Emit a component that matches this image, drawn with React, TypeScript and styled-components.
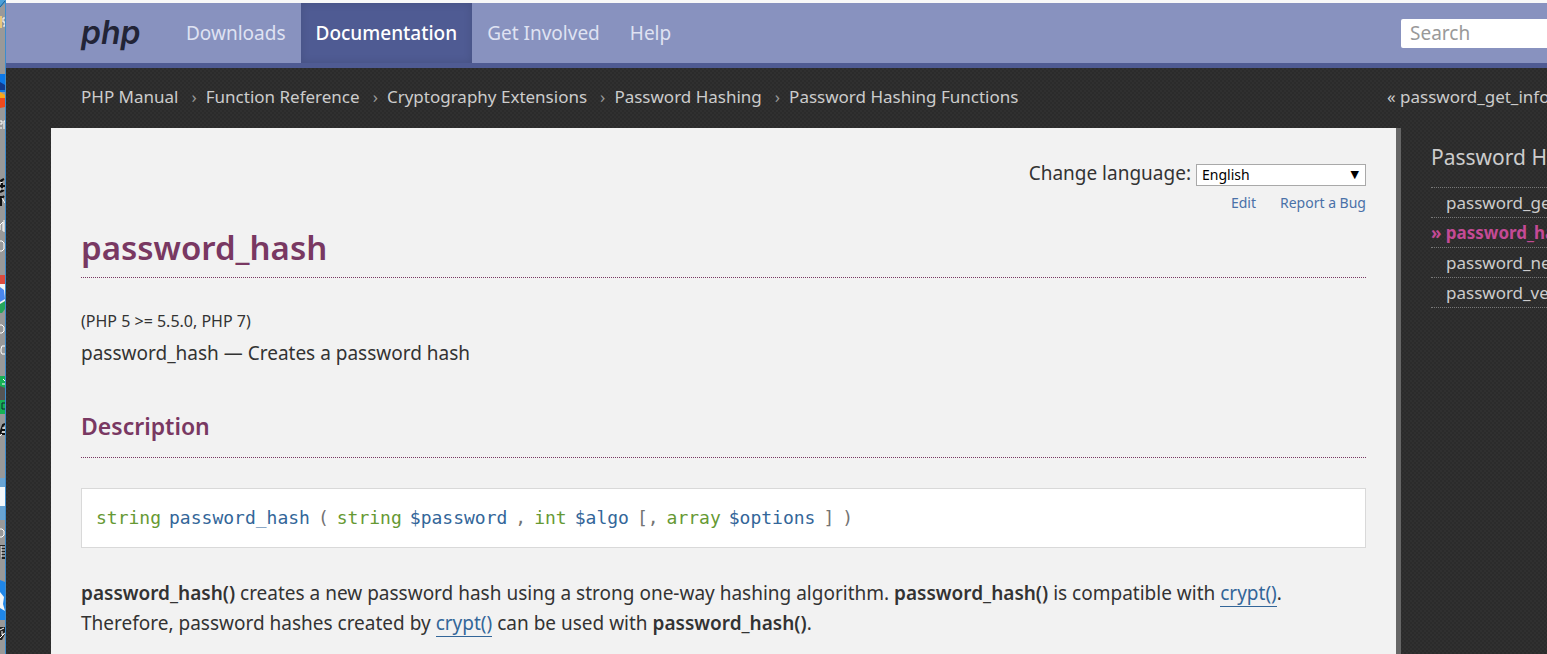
import React from 'react';
import styled, { createGlobalStyle, css } from 'styled-components';

const Global = createGlobalStyle`
  *, *::before, *::after { box-sizing: border-box; }
  body {
    margin: 0;
    background: #333;
    color: #333;
    font: 19px/30px "Noto Sans", "Open Sans", sans-serif;
    overflow-x: hidden;
  }
  a { text-decoration: none; }
`;

const Screen = styled.div`
  display: grid;
  grid-template-columns: 6px minmax(0, 1fr);
  min-height: 100vh;
`;

const DesktopEdge = styled.div`
  background: #999;
  border-right: 1px solid #3d8ccc;
  svg { display: block; }
`;

const Page = styled.div`
  display: flex;
  flex-direction: column;
  background: repeating-conic-gradient(#2b2b2b 0 25%, #303030 0 50%) 0 0 / 4px 4px;
  overflow: hidden;
`;

const Header = styled.header`
  display: flex;
  justify-content: space-between;
  align-items: center;
  height: 68px;
  padding-left: 75px;
  background: #8892bf;
  border-top: 3px solid #f8f8f8;
  border-bottom: 5px solid #4f5b93;
`;

const Brand = styled.a`
  width: 90px;
  color: #222436;
  font-family: Inter, sans-serif;
  font-size: 32px;
  font-weight: 600;
  font-style: italic;
`;

const Nav = styled.nav`
  display: flex;
  flex: 1;
  align-self: stretch;
`;

const NavLink = styled.a<{ $active?: boolean }>`
  display: flex;
  align-items: center;
  padding: 0 15px;
  color: #dfe2f2;
  ${(p) => p.$active && css`
    background: #4f5b93;
    color: #fff;
    font-weight: 500;
    box-shadow: inset 0 0 8px rgba(0, 0, 0, 0.12);
  `}
`;

const Search = styled.input`
  width: 146px;
  height: 29px;
  padding: 0 9px;
  border: 0;
  border-radius: 2px 0 0 2px;
  background: #fff;
  font: inherit;
  &::placeholder { color: #999; opacity: 1; }
`;

const Trail = styled.div`
  display: flex;
  justify-content: space-between;
  padding: 14px 0 16px 75px;
  font-size: 17px;
  white-space: nowrap;
`;

const Crumbs = styled.ol`
  display: flex;
  margin: 0;
  padding: 0;
  list-style: none;
  li + li::before {
    content: "›";
    padding: 0 9px 0 13px;
    color: #999;
  }
`;

const TrailLink = styled.a`
  color: #ccc;
`;

const PrevLink = styled(TrailLink)`
  width: 160px;
`;

const Columns = styled.div`
  display: grid;
  grid-template-columns: minmax(0, 1fr) 151px;
  flex: 1;
  padding-left: 45px;
`;

const Content = styled.main`
  padding: 30px;
  background: #f2f2f2;
`;

const Tools = styled.div`
  display: flex;
  flex-direction: column;
  align-items: flex-end;
`;

const Language = styled.form`
  display: flex;
  align-items: center;
  gap: 5px;
`;

const Picker = styled.span`
  position: relative;
  display: flex;
  padding-top: 3px;
  &::after {
    content: "▼";
    position: absolute;
    right: 7px;
    top: 3px;
    font: 11px/22px "DejaVu Sans", sans-serif;
    color: #000;
    pointer-events: none;
  }
`;

const Select = styled.select`
  appearance: none;
  width: 170px;
  height: 22px;
  padding: 0 5px;
  border: 1px solid #a9a9a9;
  border-radius: 0;
  background: #fff;
  color: #000;
  font: 14px/20px "Noto Sans", sans-serif;
`;

const EditLinks = styled.div`
  display: flex;
  gap: 24px;
  font-size: 14px;
  a { color: #4a71a8; }
`;

const Title = styled.h1`
  margin: 0 0 28px;
  padding: 13px 0 12px;
  border-bottom: 1px dotted #793862;
  color: #793862;
  font-size: 33px;
  line-height: 34px;
  font-weight: 600;
`;

const Version = styled.p`
  margin: 0 0 2px;
  font-size: 16px;
`;

const Summary = styled.p`
  margin: 0 0 43px;
`;

const Subtitle = styled.h2`
  margin: 0 0 30px;
  padding-bottom: 16px;
  border-bottom: 1px dotted #793862;
  color: #793862;
  font-size: 23px;
  font-weight: 600;
`;

const Synopsis = styled.code`
  display: flex;
  flex-wrap: wrap;
  gap: 0 8px;
  margin-bottom: 30px;
  padding: 14px;
  border: 1px solid #d9d9d9;
  background: #fff;
  color: #737373;
  font: 18px/30px "DejaVu Sans Mono", monospace;
`;

const Type = styled.span`
  color: #693;
`;

const Name = styled.span`
  color: #369;
`;

const Text = styled.p`
  margin: 0;
  strong { font-weight: 600; }
  a { color: #369; border-bottom: 1px solid #369; }
`;

const Side = styled.aside`
  padding: 14px 0 0 30px;
  border-left: 5px solid #666;
  overflow: hidden;
  white-space: nowrap;
`;

const SideTitle = styled.a`
  display: block;
  padding-bottom: 15px;
  color: #ccc;
  font-size: 21px;
`;

const SideList = styled.ul`
  margin: 0;
  padding: 0;
  list-style: none;
  border-top: 1px dotted #777;
`;

const SideItem = styled.li<{ $current?: boolean }>`
  padding-left: 15px;
  border-bottom: 1px dotted #777;
  font-size: 17px;
  line-height: 29px;
  a { color: #ccc; }
  ${(p) => p.$current && css`
    padding-left: 0;
    a { color: #c34a95; font-weight: 700; }
  `}
`;

const crumbs = ['PHP Manual', 'Function Reference', 'Cryptography Extensions', 'Password Hashing', 'Password Hashing Functions'];
const functions = ['password_get_info', 'password_hash', 'password_needs_rehash', 'password_verify'];

/* Slivers of the desktop icons that show beside the browser window. */
function DesktopIcons() {
  return (
    <svg width="5" height="654" viewBox="0 0 5 654" aria-hidden="true">
      <path d="M0 0H5V3L0 8Z" fill="#4b9fd8" />
      <path d="M0 7L5 1" stroke="#1f5f91" />
      <path d="M0 16H2V28H0Z" fill="#e9c77b" />
      <path d="M5 18H3V22H5V26H3" fill="none" stroke="#fff" />
      <path d="M0 74H5V92H0Z" fill="#0c78e8" />
      <path d="M0 82L5 85V90H0Z" fill="#123a8c" />
      <path d="M0 92L5 95V98H0Z" fill="#f7a81b" />
      <path d="M0 98H5V107L0 108Z" fill="#f04a1c" />
      <path d="M0 124H2V121H0M0 128H2M4 129V121H5" fill="none" stroke="#fff" />
      <path d="M0 181L4 179M2 180V192M0 186H5M0 192L4 190M0 200L4 196M1 196V206" fill="none" stroke="#111" strokeWidth="2" />
      <path d="M0 183L3 182M0 189H4M2 198L5 203" fill="none" stroke="#fff" />
      <path d="M0 230V225L3 222V231M4 220V232" fill="none" stroke="#fff" />
      <path d="M0 241H2L4 243V249L2 251H0" fill="none" stroke="#fff" />
      <path d="M0 275H5V284H0Z" fill="#dc4b3e" />
      <path d="M0 284H5V304H0Z" fill="#f4f4f4" />
      <path d="M0 287L4 290L5 299L0 302Z" fill="#4a87ee" />
      <path d="M0 304L5 301V309L2 313H0Z" fill="#26a65b" />
      <path d="M0 325H2L4 327V331L2 333H0" fill="none" stroke="#fff" />
      <path d="M5 346H2L1 349V352L2 354H5" fill="none" stroke="#fff" />
      <path d="M0 376H5V388H0Z" fill="#17b255" />
      <path d="M3 379L5 381M2 384H5" stroke="#fff" />
      <path d="M0 386L5 388V402H0Z" fill="#555" />
      <path d="M0 400H5V414H0Z" fill="#17b255" />
      <path d="M5 403H2V409H5" fill="none" stroke="#123" />
      <path d="M0 434L3 425L5 424M2 430H5M1 434H5" fill="none" stroke="#111" strokeWidth="2" />
      <path d="M2 428H5M2 432H5M0 436L2 434" fill="none" stroke="#fff" />
      <path d="M0 478H5V520H0Z" fill="#69a4d3" />
      <path d="M0 487H5V506H0Z" fill="#f3f7fa" />
      <path d="M0 529H2L4 531V535L2 537H0" fill="none" stroke="#fff" />
      <path d="M0 545H5V559H0Z" fill="#222" />
      <path d="M1 547H5M1 550H5M1 553H5M1 556H5M1 546V559" fill="none" stroke="#fff" />
      <path d="M0 580L5 582V620H0Z" fill="#1f86e8" />
      <path d="M0 592L4 597L3 604L5 611L0 608Z" fill="#f3f7fa" />
      <path d="M0 627H5V634L2 640H0Z" fill="#222" />
      <path d="M0 630L4 628M2 631V635L5 633M0 638L4 634" fill="none" stroke="#fff" />
    </svg>
  );
}

export default function App() {
  return (
    <>
      <Global />
      <Screen>
        <DesktopEdge><DesktopIcons /></DesktopEdge>
        <Page>
          <Header>
            <Brand href="#">php</Brand>
            <Nav>
              <NavLink href="#">Downloads</NavLink>
              <NavLink href="#" $active>Documentation</NavLink>
              <NavLink href="#">Get Involved</NavLink>
              <NavLink href="#">Help</NavLink>
            </Nav>
            <Search type="search" placeholder="Search" aria-label="Search" />
          </Header>
          <Trail>
            <Crumbs>
              {crumbs.map((c) => <li key={c}><TrailLink href="#">{c}</TrailLink></li>)}
            </Crumbs>
            <PrevLink href="#">« password_get_info</PrevLink>
          </Trail>
          <Columns>
            <Content>
              <Tools>
                <Language>
                  <label htmlFor="lang">Change language:</label>
                  <Picker><Select id="lang"><option>English</option></Select></Picker>
                </Language>
                <EditLinks><a href="#">Edit</a><a href="#">Report a Bug</a></EditLinks>
              </Tools>
              <Title>password_hash</Title>
              <Version>(PHP 5 &gt;= 5.5.0, PHP 7)</Version>
              <Summary>password_hash — Creates a password hash</Summary>
              <Subtitle>Description</Subtitle>
              <Synopsis>
                <Type>string</Type>
                <Name>password_hash</Name>
                <span>(</span>
                <Type>string</Type>
                <Name>$password</Name>
                <span>,</span>
                <Type>int</Type>
                <Name>$algo</Name>
                <span>[,</span>
                <Type>array</Type>
                <Name>$options</Name>
                <span>]</span>
                <span>)</span>
              </Synopsis>
              <Text>
                <strong>password_hash()</strong> creates a new password hash using a strong one-way hashing algorithm. <strong>password_hash()</strong> is compatible with <a href="#">crypt()</a>. Therefore, password hashes created by <a href="#">crypt()</a> can be used with <strong>password_hash()</strong>.
              </Text>
            </Content>
            <Side>
              <SideTitle href="#">Password Hashing Functions</SideTitle>
              <SideList>
                {functions.map((f) => (
                  <SideItem key={f} $current={f === 'password_hash'}>
                    <a href="#">{f === 'password_hash' ? '» ' : ''}{f}</a>
                  </SideItem>
                ))}
              </SideList>
            </Side>
          </Columns>
        </Page>
      </Screen>
    </>
  );
}
